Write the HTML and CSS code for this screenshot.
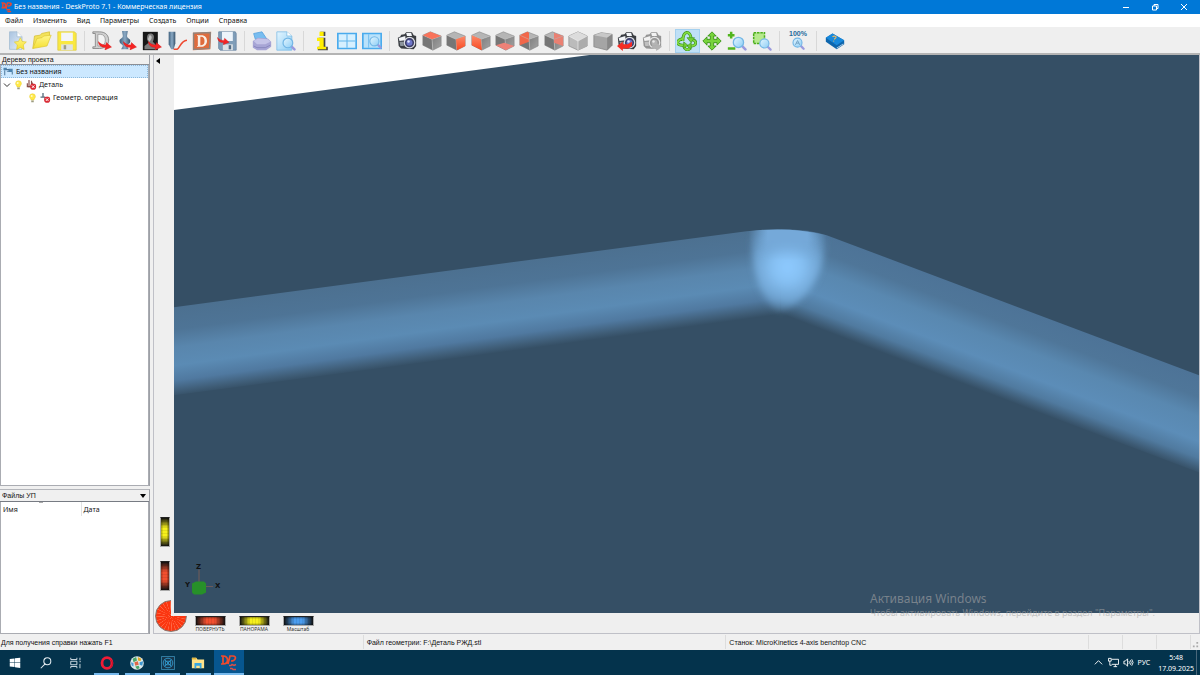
FILE: index.html
```
<!DOCTYPE html>
<html lang="ru">
<head>
  <meta charset="UTF-8" />
  <title>Без названия - DeskProto 7.1</title>
  <meta name="viewport" content="width=device-width, initial-scale=1.0" />
  <link rel="stylesheet" href="styles.css">
</head>
<body>

  <!-- Shared icon parts -->
  <svg class="defs" width="0" height="0" aria-hidden="true">
    <defs>
      <linearGradient id="paper" x1="0" y1="0" x2="1" y2="1"><stop offset="0" stop-color="#a9c3e0"/><stop offset="1" stop-color="#e6effa"/></linearGradient>
      <linearGradient id="yellow" x1="0" y1="0" x2="0" y2="1"><stop offset="0" stop-color="#fff68a"/><stop offset="1" stop-color="#f5e034"/></linearGradient>
      <linearGradient id="steel" x1="0" y1="0" x2="1" y2="0"><stop offset="0" stop-color="#3e5f7c"/><stop offset=".5" stop-color="#8aa9c4"/><stop offset="1" stop-color="#35516b"/></linearGradient>
      <linearGradient id="grey" x1="0" y1="0" x2="1" y2="1"><stop offset="0" stop-color="#7d7d7d"/><stop offset="1" stop-color="#a4a4a4"/></linearGradient>
      <linearGradient id="orange" x1="0" y1="0" x2="0" y2="1"><stop offset="0" stop-color="#fb8a6a"/><stop offset="1" stop-color="#f94a22"/></linearGradient>
      <linearGradient id="glass" x1="0" y1="0" x2="1" y2="1"><stop offset="0" stop-color="#e5f6ff"/><stop offset="1" stop-color="#8ccdf5"/></linearGradient>
      <symbol id="arrow" viewBox="0 0 14 9"><path d="M.5.500C1 5 4 6.500 7.500 6.200L7 8.800 13.500 6 8.500 1.500 8 3.800C5 4 2.500 3 .5.500z" fill="#f52424" stroke="#d01515" stroke-width=".4"/></symbol>
      <symbol id="lens" viewBox="0 0 14 14"><path d="M9.500 9.500l3 3" stroke="#9a9ade" stroke-width="2.400" stroke-linecap="round"/><circle cx="6" cy="6" r="4.800" fill="url(#glass)" stroke="#73b7e6" stroke-width="1.200"/></symbol>
      <symbol id="cube" viewBox="0 0 24 24">
        <path d="M1 5l9-4 13 5-11 4z" fill="#b5b5b5"/><path d="M1 5l11 5 1 13L1 17z" fill="#767676"/><path d="M12 10l11-4v12l-10 5z" fill="url(#grey)"/>
        <path d="M1 5l9-4 13 5v12l-10 5L1 17z" fill="none" stroke="#7d7d7d" stroke-width=".6"/><path d="M1 5l11 5 11-4M12 10l1 13" fill="none" stroke="#c4c4c4" stroke-width=".6"/>
      </symbol>
      <symbol id="camera" viewBox="0 0 24 24">
        <path d="M1 8l3-1.500 1-2 4-.5L11 1.500h7L20 5l3 1v12l-3 4-15-1-3-3z" fill="#3a3d42"/>
        <path d="M2 8.500l8-2.500v5L3 12zM11 2.500h6l1 3.500h-6z" fill="#f3f5f8"/><path d="M3 13h5v5H4z" fill="#8c949c"/>
        <circle cx="15" cy="14" r="7" fill="#dcdee3"/><circle cx="15" cy="14" r="5.500" fill="#3b3d68"/><circle cx="15" cy="14" r="3.600" fill="#6e76c8"/><circle cx="13.800" cy="12.500" r="1.500" fill="#dfe5ff"/>
      </symbol>
      <symbol id="bulb" viewBox="0 0 10 12"><path d="M5 .8A3.500 3.500 0 0 0 1.500 4.300C1.500 6 3 6.500 3.300 8.500h3.400C7 6.500 8.500 6 8.500 4.300A3.500 3.500 0 0 0 5 .8z" fill="#ffe94a" stroke="#e5c41c" stroke-width=".5"/><path d="M3.500 9h3v2h-3z" fill="#9b9b80"/><circle cx="4" cy="3.500" r="1.200" fill="#fffbc8"/></symbol>
      <symbol id="cross" viewBox="0 0 8 8"><circle cx="4" cy="4" r="3.700" fill="#d92b35"/><path d="M2.500 2.500l3 3m0-3l-3 3" stroke="#fff" stroke-width="1.200"/></symbol>
    </defs>
  </svg>

  <div class="app">

    <!-- Title bar -->
    <header class="titlebar">
      <svg class="logo" viewBox="0 0 12 12"><path d="M.5 1.500H2c4 0 4 5.500 0 5.500H.5M2 1.500V7M5.500 8L7 1.500h2c3 0 3 3.500-1.500 3.500M6 9h4M7 11h4" fill="none" stroke="#f0472c" stroke-width="1.500"/></svg>
      <h1>Без названия - DeskProto 7.1 - Коммерческая лицензия</h1>
      <div class="window-buttons">
        <button aria-label="Свернуть"><svg viewBox="0 0 8 8"><path d="M1 4.500h6"/></svg></button>
        <button aria-label="Восстановить"><svg viewBox="0 0 8 8"><path d="M1.500 3h4v4h-4zM3 3V1.500h4v4H5.500"/></svg></button>
        <button aria-label="Закрыть"><svg viewBox="0 0 8 8"><path d="M1 1l6 6M7 1L1 7"/></svg></button>
      </div>
    </header>

    <!-- Menu -->
    <nav class="menubar">
      <button>Файл</button>
      <button>Изменить</button>
      <button>Вид</button>
      <button>Параметры</button>
      <button>Создать</button>
      <button>Опции</button>
      <button>Справка</button>
    </nav>

    <!-- Toolbar -->
    <div class="toolbar">
      <div class="group group-file">
        <button aria-label="Новый"><svg viewBox="0 0 24 24"><path d="M3 1h9l6 6v15H3z" fill="url(#paper)" stroke="#a7bfd4"/><path d="M12 1v6h6" fill="#fff" stroke="#a7bfd4"/><path d="M16 8l2.200 4.500 5 .7-3.600 3.500.9 5.500L16 19.800l-4.500 2.400.9-5.500-3.600-3.500 5-.7z" fill="url(#yellow)" stroke="#dfc520" stroke-width=".7"/></svg></button>
        <button aria-label="Открыть"><svg viewBox="0 0 24 24"><path d="M1 21L3 6l7-1 1.500-2L21 1v5" fill="#f3e25a" stroke="#d8c33c"/><path d="M1 21L6 9l6-1 2-2 9-1-5 13z" fill="url(#yellow)" stroke="#dcc532" stroke-width=".8"/></svg></button>
        <button aria-label="Сохранить"><svg viewBox="0 0 24 24"><path d="M1 1h20l2 2v20H1z" fill="#f9e841" stroke="#ddcb4a"/><path d="M5 2h14v10H5z" fill="#f3f5f8"/><path d="M5 16h14v7H5z" fill="#dfe2e2"/><path d="M8 17h3v5H8z" fill="#9c9c86"/></svg></button>
      </div>
      <div class="group group-load">
        <button aria-label="Загрузить геометрию"><svg viewBox="0 0 24 24"><path d="M1 1h8c8 0 11 5 11 10s-4 10-11 10H1v-2h3V3H1z" fill="#cfcfcf" stroke="#777" stroke-width=".9"/><path d="M7 4h3c4 0 6 3 6 7s-2 7-6 7H7z" fill="#f4f4f4" stroke="#888" stroke-width=".8"/><use href="#arrow" x="7" y="12" width="17" height="11"/></svg></button>
        <button aria-label="Загрузить вектор"><svg viewBox="0 0 24 24"><path d="M6 0h7l-1 6c0 3 4 3 4 6 0 4-4 4-4 6l2 4H5l2-4c0-2-4-2-4-6 0-3 4-3 4-6z" fill="url(#steel)"/><use href="#arrow" x="7" y="12" width="17" height="11"/></svg></button>
        <button aria-label="Загрузить растр"><svg viewBox="0 0 24 24"><path d="M1 1h18v22H1z" fill="#181818"/><path d="M10 3c4 0 5 3 4 7l-1 3 4 4v5H3v-4l5-4-2-4c0-3 0-7 4-7z" fill="#7c7c7c"/><path d="M9 5c3 0 3 3 2 5l-2 3-2-3z" fill="#c1c1c1"/><use href="#arrow" x="7" y="12" width="17" height="11"/></svg></button>
        <button aria-label="Фреза"><svg viewBox="0 0 24 24"><path d="M2 1h8v14l-2 7H5l-3-6z" fill="url(#steel)"/><path d="M8 22h4c4-2 4-10 12-11" fill="none" stroke="#ee4930" stroke-width="1.800"/></svg></button>
        <button aria-label="Параметры детали"><svg viewBox="0 0 24 24"><path d="M1 2l22-1-1 21-21 1z" fill="#df6b3d"/><path d="M2 2.500l20-.5-1 19-19 1z" fill="none" stroke="#8a8784" stroke-width="1.500"/><path d="M6 5h5c5 0 7 3 7 7s-3 7-7 7H6v-1h1V6H6zM10 7v10h1c3 0 4-2 4-5s-1-5-4-5z" fill="#f9f0e8" fill-rule="evenodd"/></svg></button>
        <button aria-label="Записать УП"><svg viewBox="0 0 24 24"><path d="M2 1h20l1 2v20H4l-2-2z" fill="#7f9db8" stroke="#6b87a2"/><path d="M6 1h13v11H6z" fill="#edf4fb"/><path d="M7 16h12v7H7z" fill="#dde2e6"/><path d="M14 17h3v5h-3z" fill="#526b82"/><use href="#arrow" x="0" y="7" width="15" height="10"/></svg></button>
      </div>
      <div class="group group-print">
        <button aria-label="Печать"><svg viewBox="0 0 24 24"><path d="M4 10L2 3l10-2 6 9z" fill="#78bdf0" stroke="#5aa4df"/><path d="M1 12l6-4 12 1 4 4v6l-6 4H6l-5-3z" fill="#a7a5d5"/><path d="M2 12l5-3 12 1 3 3-6 3H6z" fill="#c5c4e8"/><path d="M2 18l4 2h10l6-3" fill="none" stroke="#8381bb"/></svg></button>
        <button aria-label="Просмотр печати"><svg viewBox="0 0 24 24"><path d="M1 1h12l6 5v17H1z" fill="url(#glass)" stroke="#83bfe6"/><path d="M13 1v5h6" fill="#fff" stroke="#83bfe6"/><use href="#lens" x="7" y="7" width="17" height="17"/></svg></button>
      </div>
      <div class="group group-view">
        <button aria-label="Информация"><svg viewBox="0 0 24 24"><path d="M10 1h6v5h-6zM8 8h8v11h3v4H7v-4h3v-7H8z" fill="#444"/><path d="M9 1h5v5H9zM6 8h8v11h3v3H6v-3h3v-7H6z" fill="#ffee00"/></svg></button>
        <button aria-label="Окна"><svg viewBox="0 0 24 24"><path d="M1 3h22v18H1z" fill="#d6f0ff" stroke="#4aabed" stroke-width="2"/><path d="M12 4v16M2 12h20" stroke="#62b5ec" stroke-width="1.300"/></svg></button>
        <button aria-label="Одно окно"><svg viewBox="0 0 24 24"><path d="M1 3h22v18H1z" fill="#b9e2fb" stroke="#4aabed" stroke-width="2"/><path d="M8 4v16" stroke="#62b5ec"/><use href="#lens" x="8" y="5" width="16" height="17"/></svg></button>
      </div>
      <div class="group group-cubes">
        <button aria-label="Вид по умолчанию"><svg viewBox="0 0 24 24"><use href="#camera"/></svg></button>
        <button aria-label="Вид сверху"><svg viewBox="0 0 24 24"><use href="#cube"/><path d="M1 5l9-4 13 5-11 4z" fill="#f9735a"/></svg></button>
        <button aria-label="Вид спереди"><svg viewBox="0 0 24 24"><use href="#cube"/><path d="M12 10l11-4v12l-10 5z" fill="url(#orange)"/></svg></button>
        <button aria-label="Вид слева"><svg viewBox="0 0 24 24"><use href="#cube"/><path d="M1 5l11 5 1 13L1 17z" fill="url(#orange)"/></svg></button>
        <button aria-label="Вид снизу"><svg viewBox="0 0 24 24"><use href="#cube"/><path d="M1 17l10-3 12 4-10 5z" fill="#ee8177"/></svg></button>
        <button aria-label="Вид сзади"><svg viewBox="0 0 24 24"><use href="#cube"/><path d="M1 5l9-4 2 1v11L1 17z" fill="#f2674a"/><path d="M1 5l11 5v3" fill="none" stroke="#d79a8c"/></svg></button>
        <button aria-label="Вид справа"><svg viewBox="0 0 24 24"><use href="#cube"/><path d="M12 2l11 4v12l-11-4z" fill="#ea8072"/><path d="M12 10l11-4" stroke="#c9a09a"/></svg></button>
        <button aria-label="Изометрия"><svg viewBox="0 0 24 24"><path d="M12 1l11 5v12l-11 5-11-5V6z" fill="#bbb" stroke="#8a8a8a" stroke-width=".8"/><path d="M1 6l11-5 11 5-11 6z" fill="#dcdcdc"/><path d="M12 12l11-6v12l-11 5z" fill="#acacac"/><path d="M1 6l11 6 11-6M12 12v11" fill="none" stroke="#eee" stroke-width=".8"/></svg></button>
        <button aria-label="Перспектива"><svg viewBox="0 0 24 24"><path d="M1 5l9-3 13 2v13l-6 6-16-4z" fill="#a5a5a5" stroke="#808080" stroke-width=".8"/><path d="M1 5l9-3 13 2-6 4z" fill="#c8c8c8"/><path d="M17 8l6-4v13l-6 6z" fill="#888"/></svg></button>
        <button aria-label="Предыдущий вид"><svg viewBox="0 0 24 24"><use href="#camera"/><path d="M0 18l7-5v3h6l5-3v5l-4 3H7v3z" fill="#f52c24"/></svg></button>
        <button aria-label="Следующий вид" disabled><svg class="faded" viewBox="0 0 24 24"><use href="#camera"/><path d="M24 19l-7-5v3h-5v4h5v3z" fill="#777"/></svg></button>
      </div>
      <div class="group group-mouse">
        <button class="pressed" aria-label="Вращать"><svg viewBox="0 0 24 24"><g fill="none" stroke="#348e12" stroke-width="3.600"><path d="M7 12C7-1 16-1 17 9M8 9C-2 11-1 18 8 17M16 10c9 1 8 8 0 8M8 18c2 6 7 6 8 0"/></g><g fill="none" stroke="#83d943" stroke-width="2.200"><path d="M7 12C7-1 16-1 17 9M8 9C-2 11-1 18 8 17M16 10c9 1 8 8 0 8M8 18c2 6 7 6 8 0"/></g><path d="M12 8h9l-4 6zM8 13v8l5-4zM17 14v8l-5-4z" fill="#73ce35" stroke="#348e12" stroke-width=".7"/></svg></button>
        <button aria-label="Сдвигать"><svg viewBox="0 0 24 24"><path d="M12 1l5 5h-3v4h4V7l5 5-5 5v-3h-4v4h3l-5 5-5-5h3v-4H6v3l-5-5 5-5v3h4V6H7z" fill="#78d33b" stroke="#348e12"/></svg></button>
        <button aria-label="Масштабировать"><svg viewBox="0 0 24 24"><path d="M5 1v8M1 5h8M1 21h9" stroke="#51b51d" stroke-width="3"/><use href="#lens" x="6" y="6" width="18" height="18"/></svg></button>
        <button aria-label="Увеличить область"><svg viewBox="0 0 24 24"><path d="M2 2h13v13H2z" fill="#b6e98d" stroke="#4cae1c" stroke-width="1.800" stroke-dasharray="3 1"/><use href="#lens" x="8" y="8" width="16" height="16"/></svg></button>
      </div>
      <div class="group group-full">
        <button class="percent" aria-label="Показать всё"><span>100%</span><svg viewBox="0 0 16 16"><use href="#lens" x="1" y="0" width="15" height="15"/><path d="M5 9l2.500-5L10 9M6 7h3" fill="none" stroke="#6e9ec0"/></svg></button>
      </div>
      <div class="group group-help">
        <button aria-label="Справка"><svg viewBox="0 0 24 24"><path d="M1 8L9 3l14 8v5l-9 6L1 13z" fill="#0e66ad"/><path d="M14 20l8-5v1l-8 5z" fill="#e8eef4"/><path d="M1 8L9 3l14 8-9 6z" fill="#1889dc"/><path d="M9 7c3-2 6 0 3 2l-1 1M10 12h1" fill="none" stroke="#e0b66b" stroke-width="1.500"/></svg></button>
      </div>
    </div>

    <main class="workspace">

      <!-- Project tree and NC files -->
      <aside class="sidebar">
        <section class="tree-panel">
          <h2>Дерево проекта</h2>
          <ul class="tree">
            <li class="selected">
              <svg class="node-icon" viewBox="0 0 12 12"><path d="M0 1h4v3H0zM6 2h5v4H6z" fill="#4d84b0"/><path d="M1.500 4v6M3 3h4M10.500 6v3M4 5h3" fill="none" stroke="#4a7599" stroke-width="1.200"/></svg>
              Без названия
            </li>
            <li class="level-1">
              <svg class="chevron" viewBox="0 0 8 8"><path d="M1 2.500l3 3 3-3"/></svg>
              <svg class="node-icon" viewBox="0 0 10 12"><use href="#bulb"/></svg>
              <svg class="node-icon" viewBox="0 0 12 12"><path d="M3 0v9M6 1v8M1 4v4h6V3" fill="none" stroke="#884d48" stroke-width="1.400"/><use href="#cross" x="4" y="4" width="8" height="8"/></svg>
              Деталь
            </li>
            <li class="level-2">
              <svg class="node-icon" viewBox="0 0 10 12"><use href="#bulb"/></svg>
              <svg class="node-icon" viewBox="0 0 12 12"><path d="M3 0v5M0 5h5l2 3" fill="none" stroke="#596d7d" stroke-width="1.600"/><use href="#cross" x="4" y="4" width="8" height="8"/></svg>
              Геометр. операция
            </li>
          </ul>
        </section>
        <section class="files-panel">
          <button class="files-head">Файлы УП <span class="arrow-down"></span></button>
          <div class="files-list">
            <table>
              <thead><tr><th class="sorted">Имя</th><th>Дата</th></tr></thead>
            </table>
          </div>
        </section>
      </aside>

      <!-- 3D view with thumbwheels -->
      <section class="view-panel">
        <div class="rail">
          <button class="collapse" aria-label="Скрыть панель"></button>
          <div class="rail-wheels">
            <input type="range" class="wheel upright yellow" aria-label="Панорама по вертикали">
            <input type="range" class="wheel upright red" aria-label="Повернуть по вертикали">
          </div>
        </div>
        <div class="viewport">
          <svg class="scene" viewBox="0 0 1024 558" preserveAspectRatio="xMinYMin slice">
            <defs>
              <linearGradient id="pipeLeft" gradientUnits="userSpaceOnUse" x1="0" y1="252" x2="12" y2="340">
                <stop offset="0" stop-color="#4c7090"/><stop offset=".25" stop-color="#4e7496"/><stop offset=".45" stop-color="#5986ad"/><stop offset=".65" stop-color="#5b8bb4"/><stop offset=".82" stop-color="#5079a0"/><stop offset=".94" stop-color="#3f5d77"/><stop offset="1" stop-color="#354f65"/>
              </linearGradient>
              <linearGradient id="pipeRight" gradientUnits="userSpaceOnUse" x1="1024" y1="320" x2="991" y2="406">
                <stop offset="0" stop-color="#4d7397"/><stop offset=".22" stop-color="#4f7699"/><stop offset=".42" stop-color="#5988b0"/><stop offset=".67" stop-color="#5c8db8"/><stop offset=".84" stop-color="#507a9f"/><stop offset=".95" stop-color="#3e5c76"/><stop offset="1" stop-color="#354f65"/>
              </linearGradient>
              <radialGradient id="elbow" gradientUnits="userSpaceOnUse" cx="613" cy="212" r="50">
                <stop offset="0" stop-color="#8ecaff"/><stop offset=".3" stop-color="#86c0f3"/><stop offset=".65" stop-color="#73a8d7" stop-opacity=".9"/><stop offset="1" stop-color="#5a8ab2" stop-opacity=".1"/>
              </radialGradient>
              <linearGradient id="band" x1="0" y1="0" x2="1" y2="0">
                <stop offset="0" stop-color="#6fa1cf" stop-opacity="0"/><stop offset=".25" stop-color="#75a9d9"/><stop offset=".75" stop-color="#75a9d9"/><stop offset="1" stop-color="#6fa1cf" stop-opacity="0"/>
              </linearGradient>
              <linearGradient id="bandFade" x1="0" y1="0" x2="0" y2="1"><stop offset=".4" stop-color="#fff"/><stop offset="1" stop-color="#000"/></linearGradient>
              <mask id="bandMask"><path d="M570 170h90v35h-90z" fill="url(#bandFade)"/></mask>
              <filter id="soft"><feGaussianBlur stdDeviation="3"/></filter>
              <clipPath id="pipeTop"><path d="M560 177.500L574 176Q615 171 652 180l20 8v82H560z"/></clipPath>
            </defs>
            <path d="M0 0h415L0 55z" fill="#fff"/>
            <path d="M0 252L572 176Q590 174 606 174v86L0 340z" fill="url(#pipeLeft)"/>
            <path d="M606 174Q635 174 652 180L1024 320v97L606 260z" fill="url(#pipeRight)"/>
            <path d="M1024 320l1000 376v97L1024 417z" fill="url(#pipeRight)"/>
            <g clip-path="url(#pipeTop)">
              <path d="M576 165h75v15C652 224 629 248 606 257C585 248 576 214 576 176z" fill="url(#elbow)" filter="url(#soft)"/>
              <path d="M574 165h78v40h-78z" fill="url(#band)" mask="url(#bandMask)"/>
            </g>
            <g class="axes">
              <path d="M25 514v16M30 531h9" stroke="#6a5a5a" stroke-width="1.200"/>
              <path d="M18 528l4-2h8l2 2v9l-4 2h-8l-2-2z" fill="#279029"/>
              <text x="22" y="513">Z</text><text x="11" y="531">Y</text><text x="41" y="532">X</text>
            </g>
          </svg>
          <div class="watermark">
            <p class="watermark-title">Активация Windows</p>
            <p>Чтобы активировать Windows, перейдите в раздел "Параметры".</p>
          </div>
        </div>
        <div class="corner">
          <button class="dial" aria-label="Вращение в плоскости"></button>
        </div>
        <div class="wheels">
          <div class="wheel-box"><input type="range" id="rotate" class="wheel red"><label for="rotate">ПОВЕРНУТЬ</label></div>
          <div class="wheel-box"><input type="range" id="pan" class="wheel yellow"><label for="pan">ПАНОРАМА</label></div>
          <div class="wheel-box"><input type="range" id="scale" class="wheel blue"><label for="scale">Масштаб</label></div>
        </div>
      </section>
    </main>

    <!-- Status bar -->
    <footer class="statusbar">
      <span>Для получения справки нажать F1</span>
      <span>Файл геометрии: F:\Деталь РЖД.stl</span>
      <span>Станок: MicroKinetics 4-axis benchtop CNC</span>
      <span></span><span></span><span></span>
      <span class="grip"><svg viewBox="0 0 8 8"><path d="M5 1h2v2H5zM5 5h2v2H5zM1 5h2v2H1z" fill="#aaa"/></svg></span>
    </footer>

    <!-- Windows taskbar -->
    <div class="taskbar">
      <div class="tasks">
        <button aria-label="Пуск"><svg viewBox="0 0 16 16"><path d="M2 3.500l5.500-.7v4.700H2zM8 2.700l6-.8v5.600H8zM2 8h5.500v4.700L2 12zM8 8h6v5.600l-6-.8z" fill="#fff"/></svg></button>
        <button aria-label="Поиск"><svg viewBox="0 0 16 16"><path d="M2 14l5-5" stroke="#e4edf2" stroke-width="1.200"/><circle cx="9.500" cy="6" r="4" fill="none" stroke="#e4edf2" stroke-width="1.200"/></svg></button>
        <button aria-label="Представление задач"><svg viewBox="0 0 16 16"><path d="M2 2v2h7V2M2 14v-2h7v2M2 6h7v4H2zM12.500 2v3M12.500 9v5M12 6.500h1.500" fill="none" stroke="#e4edf2"/></svg></button>
        <button class="open" aria-label="Opera"><svg viewBox="0 0 16 16"><ellipse cx="8" cy="8" rx="5.700" ry="6.200" fill="none" stroke="#f01c36" stroke-width="3.200"/><path d="M12 4c3 3 3 6 0 9" fill="none" stroke="#ae0a22"/></svg></button>
        <button class="open" aria-label="Браузер"><svg viewBox="0 0 16 16"><circle cx="8" cy="8" r="7.800" fill="#dce9e9"/><path d="M3 3l4-2 1 4-4 2z" fill="#4ba66a"/><path d="M9 1l4 2-1 3-3-1z" fill="#e2a928"/><path d="M1 7l3 1v4l-2-1z" fill="#4b9ddb"/><path d="M5 7l4-1 1 4-4 1z" fill="#df6847"/><path d="M11 7l4-1-1 5-3-1z" fill="#3e97d0"/><path d="M6 12l4-1 1 3-3 1z" fill="#4ba66a"/></svg></button>
        <button class="open" aria-label="CAD"><svg viewBox="0 0 16 16"><path d="M.5.500h15v15H.5z" fill="#17354b" stroke="#398bb3"/><circle cx="8" cy="8" r="5.500" fill="none" stroke="#319bd0"/><path d="M4 4l8 8M12 4l-8 8M5 6h6v4H5z" fill="none" stroke="#319bd0"/></svg></button>
        <button class="open" aria-label="Проводник"><svg viewBox="0 0 16 16"><path d="M1 2h5l1.500 2H15v10H1z" fill="#ffe38a"/><path d="M1 2h5v2H1z" fill="#e5b83c"/><path d="M4 8h8v6h-2v-3H6v3H4z" fill="#37a8e2"/></svg></button>
        <button class="open current" aria-label="DeskProto"><svg viewBox="0 0 16 16"><path d="M0 1h2c6 0 6 8 0 8H0M2 1v8M7 9l2-8h3c4 0 3 5-2 5" fill="none" stroke="#ee4a2e" stroke-width="1.700"/><path d="M8 10.500h2l1-1 2 1 2-1M9 13.500h2l1 1h3" fill="none" stroke="#d84f48" stroke-width="1.500"/></svg></button>
      </div>
      <div class="tray">
        <svg viewBox="0 0 12 12"><path d="M2 8l4-4 4 4"/></svg>
        <svg viewBox="0 0 12 12"><path d="M4 2.500h7.500v5.500H4M6 10.500h4M8 8v2.500M.5 1.500h3v3h-3zM2 4.500V9h2"/></svg>
        <svg viewBox="0 0 12 12"><path d="M1 4.500h1.500L5 2v8L2.500 7.500H1zM6.500 4.500q1 1.500 0 3M8 3.500q2 2.500 0 5M9.500 2.500q3 3.500 0 7"/></svg>
        <span class="lang">РУС</span>
        <div class="clock"><time>5:48</time><time>17.09.2025</time></div>
      </div>
    </div>
  </div>
</body>
</html>
```
FILE: styles.css
```
* {
  margin: 0;
  padding: 0;
  box-sizing: border-box;
}

body {
  background: #f0f0f0;
  color: #111;
  font: 7px/10px "Noto Sans", "Open Sans", sans-serif;
  overflow: hidden;
}

button {
  border: none;
  background: none;
  color: inherit;
  font: inherit;
}

svg {
  display: block;
}

.defs {
  position: absolute;
}

.app {
  display: flex;
  flex-direction: column;
  height: 100vh;
}

/* title bar */
.titlebar {
  display: flex;
  align-items: center;
  height: 14px;
  padding: 0 2px 0 1px;
  background: #0078d7;
  color: #fff;
}

.titlebar h1 {
  flex: 1;
  padding-left: 2px;
  font-size: 7px;
  font-weight: normal;
}

.logo {
  width: 11px;
  height: 12px;
}

.window-buttons {
  display: flex;
}

.window-buttons button {
  display: flex;
  justify-content: center;
  width: 29px;
}

.window-buttons svg {
  width: 8px;
  height: 8px;
  fill: none;
  stroke: #fff;
  stroke-width: 1;
}

/* menu */
.menubar {
  display: flex;
  height: 13px;
  background: #fff;
}

.menubar button {
  padding: 1px 5px 0;
}

/* toolbar */
.toolbar {
  display: flex;
  height: 28px;
  padding-top: 1px;
  background: #efefef;
  border-bottom: 2px solid #b4b4b4;
}

.group {
  display: flex;
  align-items: center;
  box-sizing: content-box;
  margin-left: 5px;
  padding-right: 6px;
  background: linear-gradient(#d8d8d8, #d8d8d8) no-repeat right center / 1px 20px;
}

.group button {
  display: flex;
  flex: 1;
  align-items: center;
  justify-content: center;
  height: 24px;
}

.group svg {
  width: 20px;
  height: 20px;
}

.group-file {
  width: 74px;
}

.group-load {
  width: 149px;
}

.group-print {
  width: 48px;
}

.group-view {
  width: 75px;
}

.group-cubes {
  width: 269px;
}

.group-mouse {
  width: 99px;
}

.group-full {
  width: 26px;
}

.group-help {
  width: 25px;
  background: none;
}

.group .pressed {
  background: #bfe0f6;
  outline: 1px solid #a4d0ef;
  outline-offset: -1px;
}

.group .faded {
  filter: grayscale(1);
  opacity: .5;
}

.group .percent {
  flex-direction: column;
  color: #1d6a9c;
  font: bold 7px/7px "Liberation Sans", sans-serif;
}

.percent svg {
  width: 14px;
  height: 14px;
}

/* workspace */
.workspace {
  display: flex;
  flex: 1;
  min-height: 0;
  gap: 3px;
}

.sidebar {
  display: flex;
  flex-direction: column;
  gap: 3px;
  width: 150px;
}

.tree-panel,
.files-panel {
  display: flex;
  flex-direction: column;
  border-right: 1px solid #9da0a6;
}

.tree-panel {
  flex: 1;
}

.files-panel {
  height: 145px;
  border-top: 1px solid #b4b6bb;
}

.tree-panel h2 {
  height: 10px;
  padding-left: 2px;
  font-size: 7px;
  font-weight: normal;
  line-height: 9px;
  border-bottom: 1px solid #8c8f96;
}

.tree-panel h2,
.files-head,
.statusbar {
  font-family: "Liberation Sans", sans-serif;
}

.tree {
  flex: 1;
  background: #fff;
  border: 1px solid #aaacb2;
  border-top: none;
  list-style: none;
}

.tree li {
  display: flex;
  align-items: center;
  gap: 2px;
  height: 13px;
  padding-left: 2px;
}

.tree .selected {
  background: #cce8ff;
  outline: 1px dotted #8db9dc;
  outline-offset: -1px;
}

.tree .level-2 {
  padding-left: 26px;
}

.node-icon {
  width: 11px;
  height: 10px;
}

.chevron {
  width: 8px;
  height: 8px;
  fill: none;
  stroke: #333;
}

.files-head {
  display: flex;
  align-items: center;
  justify-content: space-between;
  height: 12px;
  padding: 0 3px 0 2px;
  border-bottom: 1px solid #777b83;
}

.arrow-down {
  border: 3px solid transparent;
  border-top: 4px solid #000;
  border-bottom: none;
}

.files-list {
  flex: 1;
  background: #fff;
  border: 1px solid #aaacb2;
  border-top: none;
}

table {
  width: 100%;
  border-collapse: collapse;
  table-layout: fixed;
}

th {
  height: 14px;
  padding: 2px 2px 0;
  font-weight: normal;
  text-align: left;
}

.sorted {
  width: 80px;
  border-right: 1px solid #e2e2e2;
  background: linear-gradient(#aaa, #aaa) no-repeat center top / 4px 1px;
}

/* view */
.view-panel {
  display: grid;
  grid-template: minmax(0, 1fr) 20px / 20px minmax(0, 1fr);
  flex: 1;
  min-width: 0;
  border: 1px solid #bfc0c7;
  border-top: none;
  background: #efefef;
}

.rail {
  display: flex;
  flex-direction: column;
  justify-content: space-between;
  align-items: center;
}

.collapse {
  align-self: flex-start;
  margin: 3px 0 0 2px;
  border: 3px solid transparent;
  border-right: 4px solid #000;
  border-left: none;
}

.rail-wheels {
  display: flex;
  flex-direction: column;
  gap: 14px;
  padding: 0 0 22px 2px;
}

/* the light edge covers a quarter of the dial */
.viewport {
  position: relative;
  z-index: 1;
  background: #354f65;
  box-shadow: -3px 3px #efefef;
}

.scene {
  width: 100%;
  height: 100%;
}

.axes text {
  font: bold 7px "DejaVu Sans", sans-serif;
  fill: #111;
}

/* desktop overlay, runs past the lower edge of the view */
.watermark {
  position: absolute;
  right: 44px;
  bottom: -5px;
  color: rgba(165, 165, 165, .6);
  font: 9px/11px "Noto Sans", "Open Sans", sans-serif;
  white-space: nowrap;
}

.watermark .watermark-title {
  font-size: 12px;
  line-height: 16px;
}

.corner {
  position: relative;
}

.dial {
  position: absolute;
  left: 1px;
  bottom: 1px;
  width: 32px;
  height: 32px;
  border: 1px solid #8a7770;
  border-radius: 50%;
  background: repeating-conic-gradient(#fb3610 0 9deg, #ff6a48 12deg, #fb3610 15deg);
}

.wheels {
  display: flex;
  gap: 4px;
  padding: 3px 0 0 16px;
}

.wheel-box {
  display: flex;
  flex-direction: column;
  align-items: center;
  width: 40px;
}

.wheel-box label {
  color: #333;
  font-size: 5px;
  line-height: 6px;
}

.wheel {
  appearance: none;
  width: 31px;
  height: 10px;
  border: 1px solid #aaa;
  border-top-color: #222;
}

.wheel::-webkit-slider-thumb {
  appearance: none;
  width: 0;
}

.red {
  --tone: #f2502f;
}

.yellow {
  --tone: #f6f01c;
}

.blue {
  --tone: #4b9df0;
}

.wheel {
  background:
    repeating-linear-gradient(90deg, rgba(0, 0, 0, .08) 0 1px, transparent 1px 3px),
    linear-gradient(rgba(0, 0, 0, .4), transparent 25%, transparent 75%, rgba(0, 0, 0, .4)),
    linear-gradient(90deg, #111, var(--tone) 35%, var(--tone) 65%, #111);
}

.upright {
  width: 10px;
  height: 30px;
  background:
    repeating-linear-gradient(rgba(0, 0, 0, .08) 0 1px, transparent 1px 3px),
    linear-gradient(90deg, rgba(0, 0, 0, .3), transparent 30%, transparent 70%, rgba(0, 0, 0, .5)),
    linear-gradient(#111, var(--tone) 35%, var(--tone) 65%, #111);
}

/* status bar */
.statusbar {
  display: grid;
  grid-template-columns: 1fr 1fr 1fr 34px 34px 34px 10px;
  height: 16px;
  padding: 1px 0;
}

.statusbar span {
  padding: 3px 0 0 3px;
  border-left: 1px solid #ddd;
}

.statusbar span:first-child {
  padding-left: 1px;
  border: none;
}

.statusbar .grip {
  padding: 6px 0 0 1px;
}

.grip svg {
  width: 7px;
  height: 7px;
}

/* taskbar */
.taskbar {
  display: flex;
  justify-content: space-between;
  height: 25px;
  background: #04334c;
  color: #fff;
}

.tasks {
  display: flex;
  width: 244px;
}

.tasks button {
  display: flex;
  flex: 1;
  align-items: center;
  justify-content: center;
}

.tasks svg {
  width: 14px;
  height: 14px;
}

.tasks .open {
  background: linear-gradient(#76b9ed, #76b9ed) no-repeat center bottom / 25px 2px;
}

.tasks .current {
  background: linear-gradient(#76b9ed, #76b9ed) no-repeat center bottom / 100% 2px #07568f;
}

.tasks .current svg {
  width: 16px;
  height: 16px;
}

.tray {
  display: flex;
  align-items: center;
  gap: 4px;
  margin-right: 3px;
  padding-right: 2px;
  border-right: 1px solid #49677a;
}

.tray svg {
  width: 11px;
  height: 11px;
  fill: none;
  stroke: #fff;
  stroke-width: 1;
}

.clock {
  display: flex;
  flex-direction: column;
  padding-left: 4px;
  line-height: 11px;
  text-align: center;
}
```
